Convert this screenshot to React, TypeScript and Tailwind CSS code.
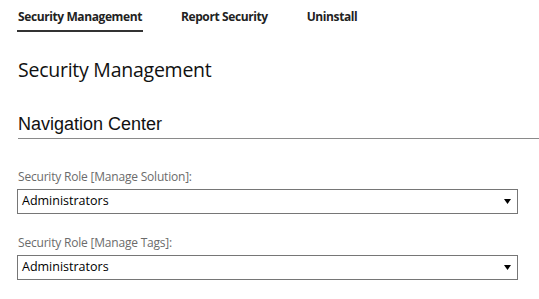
import React from "react";

function Select({ value }: { value: string }) {
  return (
    <div className="flex items-center justify-between h-[25px] w-[501px] border border-[#767676] bg-white pl-[4px] pr-[6px]">
      <span className="text-[12.5px] text-black leading-none">{value}</span>
      <svg width="7" height="5" viewBox="0 0 7 5" className="mt-[1px]">
        <path d="M0 0 H7 L3.5 5 Z" fill="#000" />
      </svg>
    </div>
  );
}

export default function App() {
  return (
    <div className="w-[539px] h-[299px] bg-white overflow-hidden font-['Open_Sans',sans-serif] text-[#222]">
      <div className="flex gap-[37px] pl-[17px]">
        <div className="pt-[8px] pb-[4px] px-[1px] border-b-2 border-[#333] text-[12px] font-bold tracking-[-0.4px]">Security Management</div>
        <div className="pt-[8px] pb-[4px] px-[1px] text-[12px] font-bold tracking-[-0.4px]">Report Security</div>
        <div className="pt-[8px] pb-[4px] px-[1px] text-[12px] font-bold tracking-[-0.4px]">Uninstall</div>
      </div>
      <div className="pl-[18px] mt-[28px] text-[19.5px] leading-none text-[#111] tracking-[-0.25px]">Security Management</div>
      <div className="ml-[18px] mt-[35px] pb-[5px] border-b border-[#8a8a8a] font-['Liberation_Sans',sans-serif] text-[18px] leading-none text-[#111]">Navigation Center</div>
      <div className="pl-[17px] mt-[32px] flex flex-col">
        <div className="pl-[1px] text-[12px] text-[#6b6b6b] leading-none mb-[6px] tracking-[-0.2px]">Security Role [Manage Solution]:</div>
        <Select value="Administrators" />
        <div className="pl-[1px] text-[12px] text-[#6b6b6b] leading-none mt-[23px] mb-[6px] tracking-[-0.2px]">Security Role [Manage Tags]:</div>
        <Select value="Administrators" />
      </div>
    </div>
  );
}
